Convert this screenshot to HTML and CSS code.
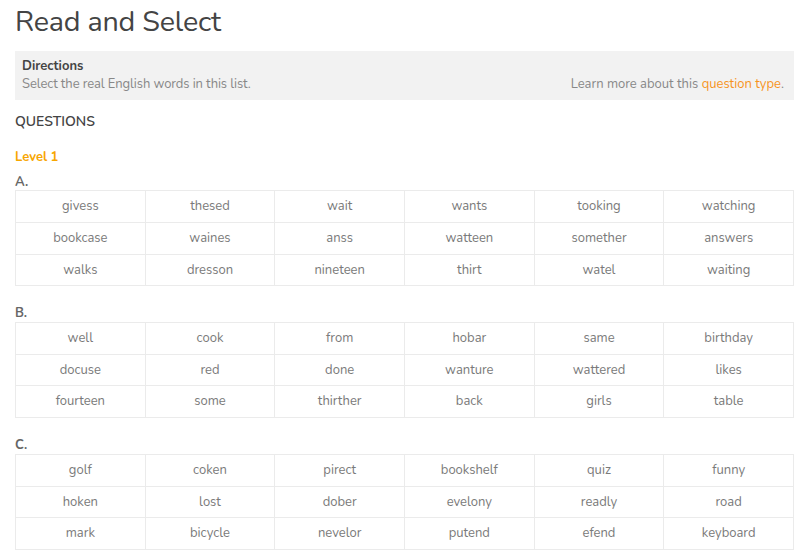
FILE: index.html
```html
<!DOCTYPE html>
<html>
<head>
<meta charset="utf-8">
<link rel="stylesheet" href="styles.css">
</head>
<body>
<div class="page">
  <h1 class="title">Read and Select</h1>
  <div class="directions">
    <div class="dir-left">
      <div class="dir-head">Directions</div>
      <div class="dir-text">Select the real English words in this list.</div>
    </div>
    <div class="dir-right">Learn more about this <span class="link">question type</span>.</div>
  </div>
  <h2 class="questions">QUESTIONS</h2>
  <div class="level">Level 1</div>

  <div class="qlabel">A.</div>
  <div class="grid">
    <div class="cell">givess</div><div class="cell">thesed</div><div class="cell">wait</div><div class="cell">wants</div><div class="cell">tooking</div><div class="cell">watching</div>
    <div class="cell">bookcase</div><div class="cell">waines</div><div class="cell">anss</div><div class="cell">watteen</div><div class="cell">somether</div><div class="cell">answers</div>
    <div class="cell">walks</div><div class="cell">dresson</div><div class="cell">nineteen</div><div class="cell">thirt</div><div class="cell">watel</div><div class="cell">waiting</div>
  </div>

  <div class="qlabel">B.</div>
  <div class="grid">
    <div class="cell">well</div><div class="cell">cook</div><div class="cell">from</div><div class="cell">hobar</div><div class="cell">same</div><div class="cell">birthday</div>
    <div class="cell">docuse</div><div class="cell">red</div><div class="cell">done</div><div class="cell">wanture</div><div class="cell">wattered</div><div class="cell">likes</div>
    <div class="cell">fourteen</div><div class="cell">some</div><div class="cell">thirther</div><div class="cell">back</div><div class="cell">girls</div><div class="cell">table</div>
  </div>

  <div class="qlabel">C.</div>
  <div class="grid">
    <div class="cell">golf</div><div class="cell">coken</div><div class="cell">pirect</div><div class="cell">bookshelf</div><div class="cell">quiz</div><div class="cell">funny</div>
    <div class="cell">hoken</div><div class="cell">lost</div><div class="cell">dober</div><div class="cell">evelony</div><div class="cell">readly</div><div class="cell">road</div>
    <div class="cell">mark</div><div class="cell">bicycle</div><div class="cell">nevelor</div><div class="cell">putend</div><div class="cell">efend</div><div class="cell">keyboard</div>
  </div>
</div>
</body>
</html>
```

FILE: styles.css
```css
html, body {
  margin: 0;
  padding: 0;
  background: #ffffff;
}
body {
  font-family: "Nunito", "Open Sans", "Lato", sans-serif;
  color: #555555;
  font-size: 13px;
}
.page {
  padding: 0 13px 0 15px;
}
.title {
  margin: 0;
  padding-top: 4px;
  font-size: 28.7px;
  font-weight: 400;
  line-height: 36px;
  color: #444444;
  letter-spacing: -0.2px;
}
.directions {
  margin-top: 11px;
  background: #f2f2f2;
  padding: 7px 10px 7px 7px;
  display: flex;
  justify-content: space-between;
  align-items: flex-end;
}
.dir-head {
  font-weight: 700;
  color: #444444;
  line-height: 17px;
}
.dir-text {
  color: #888888;
  line-height: 18px;
  letter-spacing: -0.1px;
}
.dir-right {
  color: #888888;
  line-height: 18px;
}
.link {
  color: #f7941d;
}
.questions {
  margin: 13px 0 0 0;
  font-size: 14px;
  font-weight: 600;
  line-height: 18px;
  color: #444444;
}
.level {
  margin-top: 17px;
  color: #f7a600;
  font-weight: 700;
  line-height: 18px;
}
.qlabel {
  margin-top: 7.5px;
  font-weight: 700;
  color: #666666;
  line-height: 16.5px;
}
.grid + .qlabel {
  margin-top: 19px;
}
.grid {
  display: grid;
  grid-template-columns: repeat(6, 1fr);
  border-top: 1px solid #ebebeb;
  border-left: 1px solid #ebebeb;
}
.cell {
  border-right: 1px solid #ebebeb;
  border-bottom: 1px solid #ebebeb;
  text-align: center;
  color: #7a7a7a;
  line-height: 30.8px;
  height: 30.8px;
}
```
